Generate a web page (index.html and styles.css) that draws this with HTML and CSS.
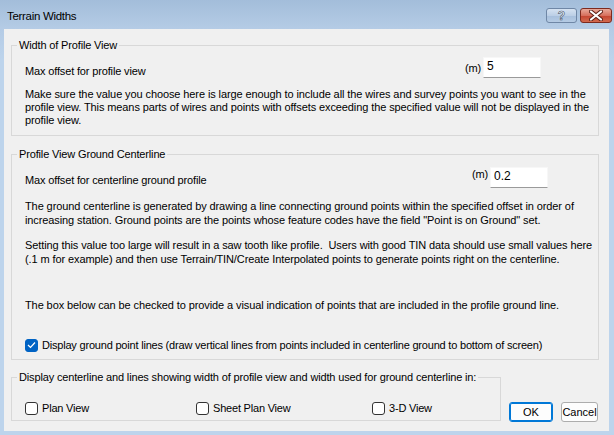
FILE: index.html
```html
<!DOCTYPE html>
<html lang="en">
<head>
    <meta charset="UTF-8">
    <title>Terrain Widths</title>
    <link rel="stylesheet" href="styles.css">
</head>
<body>
    <div class="window">
        <div class="titlebar">
            <span class="title">Terrain Widths</span>
            <div class="caption-buttons">
                <span class="cap-btn help">?</span>
                <span class="cap-btn close">
                    <svg width="14" height="11" viewBox="0 0 14 11">
                        <path d="M2 1.5 L12 9.5 M12 1.5 L2 9.5" stroke="#5a1e14" stroke-width="4" stroke-linecap="round"/>
                        <path d="M2 1.5 L12 9.5 M12 1.5 L2 9.5" stroke="#fff" stroke-width="2.2" stroke-linecap="round"/>
                    </svg>
                </span>
            </div>
        </div>

        <div class="client">
            <fieldset class="group group-width">
                <legend>Width of Profile View</legend>
                <div class="field-row">
                    <label for="profileOffset">Max offset for profile view</label>
                    <span class="unit">(m)</span>
                    <input type="text" id="profileOffset" value="5">
                </div>
                <p class="note">Make sure the value you choose here is large enough to include all the wires and survey points you want to see in the<br>profile view. This means parts of wires and points with offsets exceeding the specified value will not be displayed in the<br>profile view.</p>
            </fieldset>

            <fieldset class="group group-ground">
                <legend>Profile View Ground Centerline</legend>
                <div class="field-row">
                    <label for="groundOffset">Max offset for centerline ground profile</label>
                    <span class="unit">(m)</span>
                    <input type="text" id="groundOffset" value="0.2">
                </div>
                <p class="note">The ground centerline is generated by drawing a line connecting ground points within the specified offset in order of<br>increasing station. Ground points are the points whose feature codes have the field "Point is on Ground" set.</p>
                <p class="note note-saw">Setting this value too large will result in a saw tooth like profile.&nbsp; Users with good TIN data should use small values here<br>(.1 m for example) and then use Terrain/TIN/Create Interpolated points to generate points right on the centerline.</p>
                <p class="note note-box">The box below can be checked to provide a visual indication of points that are included in the profile ground line.</p>
                <label class="check-row">
                    <span class="check checked">
                        <svg width="9" height="8" viewBox="0 0 9 8"><path d="M1 4 L3.5 6.5 L8 1.5" fill="none" stroke="#fff" stroke-width="1.2"/></svg>
                    </span>
                    Display ground point lines (draw vertical lines from points included in centerline ground to bottom of screen)
                </label>
            </fieldset>

            <div class="bottom-row">
                <fieldset class="group group-display">
                    <legend>Display centerline and lines showing width of profile view and width used for ground centerline in:</legend>
                    <div class="check-grid">
                        <label class="check-row"><span class="check"></span>Plan View</label>
                        <label class="check-row"><span class="check"></span>Sheet Plan View</label>
                        <label class="check-row"><span class="check"></span>3-D View</label>
                    </div>
                </fieldset>
                <div class="buttons">
                    <button class="btn btn-default">OK</button>
                    <button class="btn">Cancel</button>
                </div>
            </div>
        </div>
    </div>
</body>
</html>
```

FILE: styles.css
```css
body {
    margin: 0;
    font-family: "Liberation Sans", Arial, sans-serif;
    font-size: 11px;
    color: #000;
}
.window {
    width: 614px;
    height: 435px;
    background: linear-gradient(to bottom, #a3bdda 0px, #b4cbe5 28px, #bdd4ec 60px, #bdd4ec 100%);
    box-sizing: border-box;
    padding: 0 5px 4px 4px;
    display: flex;
    flex-direction: column;
}
.titlebar {
    height: 29px;
    display: flex;
    align-items: flex-start;
}
.title {
    margin: 9px 0 0 3px;
    font-size: 11.5px;
    letter-spacing: -0.3px;
    line-height: 14px;
}
.caption-buttons {
    margin-left: auto;
    margin-top: 8px;
    display: flex;
    gap: 3px;
    margin-right: -3px;
}
.cap-btn {
    height: 15px;
    border-radius: 3px;
    display: flex;
    align-items: center;
    justify-content: center;
    box-sizing: border-box;
}
.help {
    width: 31px;
    border: 1px solid #6f87a6;
    background: linear-gradient(to bottom, #d5e2f1 0%, #bccfe6 50%, #a7bfdc 51%, #b5cbe4 100%);
    color: #fff;
    font-weight: bold;
    font-size: 12px;
    -webkit-text-stroke: 0.6px #3b4f69;
}
.close {
    width: 32px;
    border: 1px solid #7d2a1e;
    background: linear-gradient(to bottom, #e8a99a 0%, #d7705d 50%, #c4432f 51%, #d26a4f 100%);
}
.client {
    flex: 1;
    background: #f0f0f0;
    padding: 10px 10px 0 7px;
}
.group {
    border: 1px solid #d8d8d8;
    margin: 0;
    padding: 0 0 0 13px;
    min-width: 0;
}
.group legend {
    margin-left: -8px;
    padding: 0 2px;
    line-height: 13px;
    letter-spacing: -0.15px;
}
.field-row {
    display: flex;
    align-items: flex-start;
    height: 21px;
    letter-spacing: -0.15px;
}
.field-row label {
    margin-top: 8px;
}
.unit {
    margin-left: auto;
    margin-top: 5px;
    margin-right: 2px;
}
.field-row input {
    width: 58px;
    height: 21px;
    box-sizing: border-box;
    border: 1px solid #f7f7f7;
    border-bottom-color: #9a9a9a;
    background: #fff;
    font: inherit;
    font-size: 12px;
    padding: 0 3px 4px;
    outline: none;
}
.note {
    margin: 0;
    white-space: nowrap;
    letter-spacing: -0.1px;
}
.group-width {
    padding-bottom: 8px;
}
.group-width .field-row {
    margin-top: 5px;
    margin-right: 57px;
}
.group-width .note {
    margin-top: 10px;
    line-height: 13px;
}
.group-ground {
    margin-top: 12px;
    padding-bottom: 7px;
}
.group-ground .field-row {
    margin-top: 6px;
    margin-right: 50px;
}
.group-ground .field-row label {
    margin-top: 7px;
}
.group-ground .unit {
    margin-top: 1px;
}
.group-ground .note {
    line-height: 14px;
    margin-top: 11px;
}
.group-ground .note-box {
    margin-top: 32px;
}
.check-row {
    display: flex;
    align-items: center;
    gap: 4px;
    height: 14px;
    white-space: nowrap;
    letter-spacing: -0.2px;
}
.group-ground .check-row {
    margin-top: 26px;
}
.check {
    width: 13px;
    height: 13px;
    box-sizing: border-box;
    border: 1px solid #333;
    border-radius: 3px;
    background: #fff;
    display: flex;
    align-items: center;
    justify-content: center;
}
.check.checked {
    background: #0063c4;
    border-color: #0063c4;
}
.bottom-row {
    display: flex;
    align-items: flex-end;
    margin-top: 11px;
}
.group-display {
    width: 490px;
    box-sizing: border-box;
    padding-bottom: 5px;
    margin-bottom: 10px;
}
.check-grid {
    display: grid;
    grid-template-columns: 171px 176px auto;
    margin-top: 17px;
}
.buttons {
    display: flex;
    gap: 8px;
    margin-left: 8px;
    margin-bottom: 9px;
}
.btn {
    height: 20px;
    box-sizing: border-box;
    border: 1px solid #adadad;
    border-radius: 3px;
    background: #fdfdfd;
    font: inherit;
    font-size: 11px;
    padding: 0;
    width: 37px;
    color: #000;
}
.btn-default {
    width: 44px;
    border: 1px solid #0078d7;
    box-shadow: inset 0 0 0 1px #0078d7;
}
```
